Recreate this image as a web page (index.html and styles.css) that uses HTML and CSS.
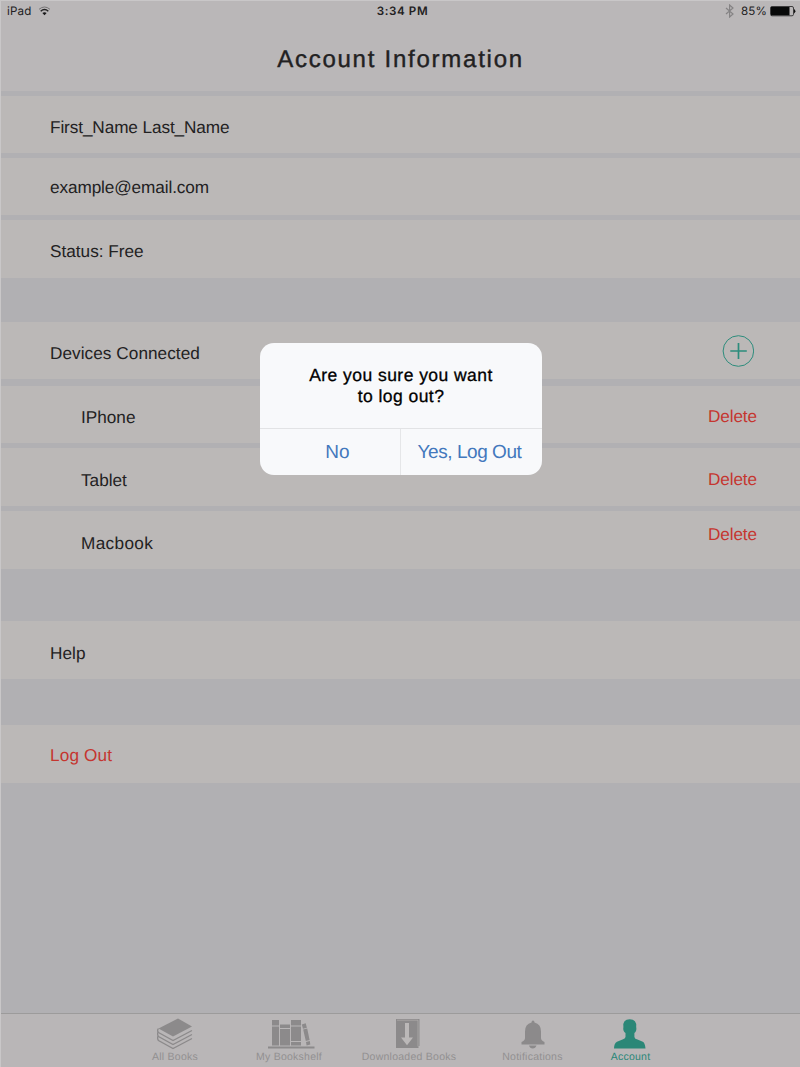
FILE: index.html
```html
<!DOCTYPE html>
<html lang="en">
<head>
<meta charset="utf-8">
<title>Account Information</title>
<link rel="stylesheet" href="styles.css">
</head>
<body>
<div class="screen">
  <header class="header">
    <div class="status">
      <div class="status-left"><span>iPad</span>
        <svg class="wifi" width="13" height="10" viewBox="0 0 12 10" fill="none"><path d="M.5 3.3Q6-1.3 11.5 3.3" stroke="#777576" stroke-width="1"/><path d="M2.2 5.2Q6 1.9 9.8 5.2" stroke="#242324" stroke-width="1.5"/><path d="M3.9 7Q6 5.3 8.1 7L6 9.3Z" fill="#181718"/></svg>
      </div>
      <div class="time">3:34 PM</div>
      <div class="status-right">
        <svg class="bluetooth" width="10" height="14" viewBox="0 0 10 14"><path d="M1 4L8 10L4.6 13V1L8 4L1 10" fill="none" stroke="#858384" stroke-width="1.2"/></svg>
        <span class="percent">85%</span>
        <svg class="battery" width="26" height="11" viewBox="0 0 26 11"><rect x=".5" y=".5" width="23" height="9.3" rx="1.5" fill="none" stroke="#3e3d3e"/><rect x="1" y="1" width="18.5" height="8.3" fill="#080909"/><path d="M24 3Q26.8 5.2 24 7.4Z" fill="#111"/></svg>
      </div>
    </div>
    <h1 class="title">Account Information</h1>
  </header>
  <main class="content">
    <section class="group profile">
      <div class="row name"><span>First_Name Last_Name</span></div>
      <div class="row email"><span>example@email.com</span></div>
      <div class="row plan"><span>Status: Free</span></div>
    </section>
    <section class="group devices">
      <div class="row connected"><span>Devices Connected</span>
        <svg class="add" width="32" height="32" viewBox="0 0 32 32" fill="none" stroke="#2d8c7c"><circle cx="16.4" cy="16" r="15.3" stroke-width="1"/><path d="M8.3 16H24.8M16.5 8V24" stroke-width="1.7"/></svg>
      </div>
      <div class="row device iphone"><span>IPhone</span><span class="delete">Delete</span></div>
      <div class="row device tablet"><span>Tablet</span><span class="delete">Delete</span></div>
      <div class="row device macbook"><span>Macbook</span><span class="delete">Delete</span></div>
    </section>
    <section class="group help"><div class="row"><span>Help</span></div></section>
    <section class="group logout"><div class="row"><span>Log Out</span></div></section>
  </main>
  <nav class="tabs">
    <div class="tab all"><svg width="36" height="32" viewBox="0 0 36 32"><path d="M1.5 10.5L21 .5L35 8.5L16 18.5Z" fill="#8c8a8b"/><path d="M1.5 10.5Q-.3 12.5 1.5 14.5L16 22.5L35 12.5M1 14Q0 16.5 1.5 18.5L16 26.5L35 16.5M1 18Q0 20.5 1.5 22.5L16 30.5L35 20.5" fill="none" stroke="#8c8a8b" stroke-width="1.3"/></svg><span>All Books</span></div>
    <div class="tab shelf"><svg width="47" height="32" viewBox="0 0 47 32" fill="#8c8a8b"><path d="M4 2H11V7.5H4ZM4 8.5H11V27.5H4ZM12 6.5H22V10H12ZM12 11H22V27.5H12ZM23 2H33V7.5H23ZM23 8.5H33V23H23ZM23 24H33V27.5H23ZM0 28.5H46.5V30.5H0Z"/><path d="M33.8 6.5L37.7 5.3L38.9 9.8L35 10.8ZM35.2 11.6L39.2 10.6L41.6 21.9L37.8 23ZM38 24L41.8 23L42.3 26.5L38.6 27.5Z"/></svg><span>My Bookshelf</span></div>
    <div class="tab downloads"><svg width="25" height="32" viewBox="0 0 25 32"><path d="M1 1H24.5V28H23.5V30H1Z" fill="#8c8a8b"/><path d="M2 2.2H23V28.5" fill="none" stroke="#b8b5b6" stroke-width=".6"/><path d="M10 5H14V19.5H18L12 27.2L6 19.5H10Z" fill="#bbb8b8"/></svg><span>Downloaded Books</span></div>
    <div class="tab notices"><svg width="24" height="32" viewBox="0 0 24 32" fill="#8c8a8b"><path d="M10.5 4.5Q10.5 2.5 12 2.5T13.5 4.5Q20 6 20 13.5V20Q20 22.5 23.5 24V26.5H.5V24Q4 22.5 4 20V13.5Q4 6 10.5 4.5ZM8 27.6H15.5Q14.5 30.5 11.7 30.5T8 27.6Z"/></svg><span>Notifications</span></div>
    <div class="tab account"><svg width="32" height="32" viewBox="0 0 32 32" fill="#2b8777"><path d="M9.4 9Q8.5 1.3 15.7 1.3T22.2 9Q23 13 20.4 15V19Q20.8 21 23.5 21.6L28.8 23.8Q31 25 31.5 30.5H0Q0 25.5 3 23.8L8.5 21.6Q11.2 20.7 11.5 19V15Q8.6 13 9.4 9Z"/></svg><span>Account</span></div>
  </nav>
  <div class="dialog">
    <div class="question">Are you sure you want<br>to log out?</div>
    <div class="actions"><div class="no">No</div><div class="yes">Yes, Log Out</div></div>
  </div>
</div>
</body>
</html>
```
FILE: styles.css
```css
* { box-sizing: border-box; }
body { margin: 0; background: #c9c7c8; font-family: "Liberation Sans", Arial, sans-serif; color: #222122; text-rendering: geometricPrecision; }
.screen { position: relative; display: flex; flex-direction: column; height: 1067px; padding: 1px 0 0 1px; overflow: hidden; }
.header { height: 90px; background: #bab7b8; flex: none; }
.status { height: 20px; display: grid; grid-template-columns: 1fr auto 1fr; align-items: center; font: 11.6px/20px Inter, "Liberation Sans", sans-serif; letter-spacing: .15px; }
.status-left { display: flex; align-items: center; gap: 7px; padding-left: 6px; }
.time { font-weight: 600; letter-spacing: .6px; margin-left: 4px; }
.status-right { display: flex; align-items: center; justify-content: flex-end; padding-right: 4px; }
.percent { margin: 0 3px 0 6px; }
.title { margin: 25px 0 0; font-size: 24px; line-height: 28px; font-weight: 400; letter-spacing: 1.75px; text-align: center; -webkit-text-stroke: .4px #222122; }
.content { flex: 1; background: #b1b0b3; padding-top: 5px; }
.group { display: flex; flex-direction: column; gap: 5px; }
.row { display: flex; justify-content: space-between; align-items: flex-start; height: 58px; background: #bbb8b7; padding: 21px 43px 0 49px; font-size: 17.2px; line-height: 20px; letter-spacing: .05px; }
.name, .email { height: 57px; letter-spacing: -.1px; }
.email { padding-top: 19px; }
.plan { padding-top: 21px; letter-spacing: 0; }
.devices { margin-top: 44px; }
.connected { height: 57px; margin-bottom: 2px; padding-right: 46px; }
.add { margin-top: -8px; }
.device { padding-left: 80px; letter-spacing: 0; }
.iphone { height: 57px; }
.macbook { letter-spacing: .35px; }
.delete { color: #c5352f; margin-top: -1px; letter-spacing: -.1px; }
.tablet, .macbook { padding-top: 22px; }
.macbook .delete { margin-top: -9px; }
.help { margin-top: 52px; }
.help .row { padding-top: 22px; }
.logout { margin-top: 46px; }
.logout .row { padding-top: 20px; color: #c5352f; letter-spacing: .15px; }
.tabs { display: flex; flex: none; height: 54px; border-top: 1px solid #9c9b9b; background: #b9b6b7; padding: 4px 0 0 138px; }
.tab { display: flex; flex-direction: column; align-items: center; font-size: 10.5px; line-height: 15px; letter-spacing: .25px; color: #929091; white-space: nowrap; }
.all { width: 72px; }
.shelf { width: 156px; }
.shelf svg { margin-left: 4px; }
.downloads { width: 84px; }
.downloads svg { margin-right: 3px; }
.notices { width: 163px; }
.account { width: 33px; color: #2b8777; }
.account svg { margin-right: 2px; }
.dialog { position: absolute; left: 260px; top: 343px; width: 282px; height: 132px; border-radius: 14px; background: #f8f9fb; overflow: hidden; }
.question { height: 85px; padding-top: 22px; text-align: center; color: #000; font-size: 17.5px; line-height: 21px; letter-spacing: .45px; -webkit-text-stroke: .3px #000; }
.actions { display: flex; height: 47px; border-top: 1px solid #e2e3e5; font-size: 19px; line-height: 47px; color: #4378bd; text-align: center; }
.no { width: 141px; padding-left: 15px; border-right: 1px solid #e5e6e8; }
.yes { width: 141px; padding-right: 4px; letter-spacing: -.45px; }
```
